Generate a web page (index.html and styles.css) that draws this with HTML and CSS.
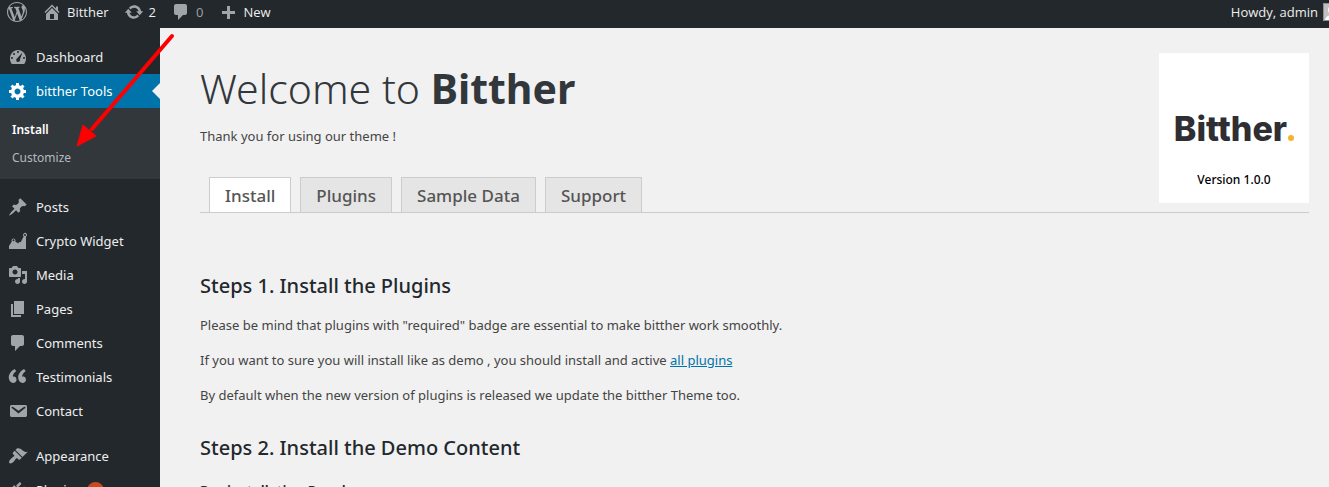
FILE: index.html
```html
<!DOCTYPE html>
<html lang="en">
<head>
<meta charset="utf-8">
<title>Welcome to Bitther</title>
<link rel="stylesheet" href="styles.css">
</head>
<body>
<header class="adminbar">
  <a class="bar-item" href="#" aria-label="About WordPress"><svg class="icon" viewBox="0 0 20 20"><path d="M20 10c0-5.51-4.49-10-10-10C4.48 0 0 4.49 0 10c0 5.52 4.48 10 10 10 5.51 0 10-4.48 10-10zM7.78 15.37L4.37 6.22c.55-.02 1.17-.08 1.17-.08.5-.06.44-1.13-.06-1.11 0 0-1.45.11-2.37.11-.18 0-.37 0-.58-.01C4.12 2.69 6.87 1.11 10 1.11c2.33 0 4.45.87 6.05 2.34-.68-.11-1.65.39-1.65 1.58 0 .74.45 1.36.9 2.1.35.61.55 1.36.55 2.46 0 1.49-1.4 5-1.4 5l-3.03-8.37c.54-.02.82-.17.82-.17.5-.05.44-1.25-.06-1.22 0 0-1.44.12-2.38.12-.87 0-2.33-.12-2.33-.12-.5-.03-.56 1.2-.06 1.22l.92.08 1.26 3.41zM17.41 10c.24-.64.74-1.87.43-4.25.7 1.29 1.05 2.71 1.05 4.25 0 3.29-1.73 6.24-4.4 7.78.97-2.59 1.94-5.2 2.92-7.78zM6.1 18.09C3.12 16.65 1.11 13.53 1.11 10c0-1.3.23-2.48.72-3.59C3.25 10.3 4.67 14.2 6.1 18.09zm4.03-6.63l2.58 6.98c-.86.29-1.76.45-2.71.45-.79 0-1.57-.11-2.29-.33.81-2.38 1.62-4.74 2.42-7.1z"/></svg></a>
  <a class="bar-item" href="#"><svg class="icon" viewBox="0 0 20 20"><path d="M16 8.5l1.53 1.53-1.06 1.06L10 4.6l-6.47 6.49-1.06-1.06L10 2.5l4 4v-2h2v4zm-6-2.46l6 5.99V18H4v-5.97zM12 17v-5H8v5h4z"/></svg>Bitther</a>
  <a class="bar-item" href="#"><svg class="icon" viewBox="0 0 20 20"><path d="M10.2 3.28c3.53 0 6.43 2.61 6.92 6h2.08l-3.5 4-3.5-4h2.32c-.45-1.97-2.21-3.45-4.32-3.45-1.45 0-2.73.71-3.54 1.78L4.95 5.66C6.23 4.2 8.11 3.28 10.2 3.28zm-.4 13.44c-3.52 0-6.43-2.61-6.92-6H.8l3.5-4c1.17 1.33 2.33 2.67 3.5 4H5.48c.45 1.97 2.21 3.45 4.32 3.45 1.45 0 2.73-.71 3.54-1.78l1.71 1.95c-1.28 1.46-3.15 2.38-5.25 2.38z"/></svg>2</a>
  <a class="bar-item muted" href="#"><svg class="icon" viewBox="0 0 20 20"><path d="M5 2h9c1.1 0 2 .9 2 2v7c0 1.1-.9 2-2 2h-2l-5 5v-5H5c-1.1 0-2-.9-2-2V4c0-1.1.9-2 2-2z"/></svg>0</a>
  <a class="bar-item" href="#"><svg class="icon" viewBox="0 0 20 20"><path d="M17 9v3h-5v5H9v-5H4V9h5V4h3v5h5z"/></svg>New</a>
  <a class="bar-item account" href="#">Howdy, admin<svg class="avatar" viewBox="0 0 18 18"><path fill="#c0c0c0" d="M0 0h18v18H0z"/><circle cx="9" cy="7" r="4" fill="#fff"/><path fill="#fff" d="M2 18c0-8 14-8 14 0z"/><path fill="none" stroke="#8c8f94" d="M.5.5h17v17H.5z"/></svg></a>
</header>
<div class="layout">
  <nav class="sidebar" aria-label="Main menu">
    <a class="menu-item" href="#"><svg class="icon" viewBox="0 0 20 20"><path fill-rule="evenodd" d="M3.76 17h12.48c1.14-1.55 1.76-3.43 1.76-5.5C18 6.81 14.42 3 10 3s-8 3.81-8 8.5c0 2.07.62 3.95 1.76 5.5zM10 4a1 1 0 110 2 1 1 0 010-2zM6 6a1 1 0 110 2 1 1 0 010-2zM14.5 5.5L12 12.2c.5 1.8-.6 2.8-2 2.8-1.5 0-2.3-1.6-1.5-3zM4 10a1 1 0 110 2 1 1 0 010-2zM16 10a1 1 0 110 2 1 1 0 010-2z"/></svg>Dashboard</a>
    <a class="menu-item current" href="#"><svg class="icon" viewBox="0 0 20 20"><path d="M18 12h-2.18c-.17.7-.44 1.35-.81 1.93l1.54 1.54-2.1 2.1-1.54-1.54c-.58.36-1.23.63-1.91.79V19H8v-2.18c-.68-.16-1.33-.43-1.91-.79l-1.54 1.54-2.12-2.12 1.54-1.54c-.36-.58-.63-1.23-.79-1.91H1V9.03h2.17c.16-.7.44-1.35.8-1.94L2.43 5.55l2.1-2.1 1.54 1.54c.58-.37 1.24-.64 1.93-.81V2h3v2.18c.68.16 1.33.43 1.91.79l1.54-1.54 2.12 2.12-1.54 1.54c.36.59.64 1.24.8 1.94H18V12zm-8.5 1.5c1.66 0 3-1.34 3-3s-1.34-3-3-3-3 1.34-3 3 1.34 3 3 3z"/></svg>bitther Tools</a>
    <div class="submenu">
      <a class="sub-item active" href="#">Install</a>
      <a class="sub-item" href="#">Customize</a>
    </div>
    <a class="menu-item" href="#"><svg class="icon" viewBox="0 0 20 20"><path d="M10.44 3.02l1.82-1.82 6.36 6.35-1.83 1.82c-1.05-.68-2.48-.57-3.41.36l-.75.75c-.92.93-1.04 2.35-.35 3.41l-1.83 1.82-2.41-2.41-2.8 2.79c-.42.42-3.38 2.71-3.8 2.29s1.86-3.39 2.28-3.81l2.79-2.79L4.1 9.36l1.83-1.82c1.05.69 2.48.57 3.4-.36l.75-.75c.93-.92 1.05-2.35.36-3.41z"/></svg>Posts</a>
    <a class="menu-item" href="#"><svg class="icon" viewBox="0 0 20 20"><path fill-rule="evenodd" d="M18 18V5.72A2 2 0 1015.6 5.4L12.7 11.3A1.5 1.5 0 0010.3 12.5L7.2 10.6A2 2 0 103.8 10.6L1 15v3zM17 3a1 1 0 110 2 1 1 0 010-2zM5.5 8.2a1 1 0 110 2 1 1 0 010-2z"/></svg>Crypto Widget</a>
    <a class="menu-item" href="#"><svg class="icon" viewBox="0 0 20 20"><path d="M13 11V4c0-.55-.45-1-1-1h-1.67L9 1H5L3.67 3H2c-.55 0-1 .45-1 1v7c0 .55.45 1 1 1h10c.55 0 1-.45 1-1zM7 4.5c1.38 0 2.5 1.12 2.5 2.5S8.38 9.5 7 9.5 4.5 8.38 4.5 7 5.62 4.5 7 4.5zM14 6h5v10.5c0 1.38-1.12 2.5-2.5 2.5S14 17.88 14 16.5s1.12-2.5 2.5-2.5c.17 0 .34.02.5.05V9h-3V6zm-4 8.05V13h2v3.5c0 1.38-1.12 2.5-2.5 2.5S7 17.88 7 16.5 8.12 14 9.5 14c.17 0 .34.02.5.05z"/></svg>Media</a>
    <a class="menu-item" href="#"><svg class="icon" viewBox="0 0 20 20"><path d="M6 15V2h10v13H6zm-1 1h8v2H3V5h2v11z"/></svg>Pages</a>
    <a class="menu-item" href="#"><svg class="icon" viewBox="0 0 20 20"><path d="M5 2h9c1.1 0 2 .9 2 2v7c0 1.1-.9 2-2 2h-2l-5 5v-5H5c-1.1 0-2-.9-2-2V4c0-1.1.9-2 2-2z"/></svg>Comments</a>
    <a class="menu-item" href="#"><svg class="icon" viewBox="0 0 20 20"><path d="M8.54 12.74c0-.87-.24-1.61-.72-2.22-.73-.92-2.14-1.03-2.96-.85-.34-1.93 1.3-4.39 3.42-5.45L6.65 1.94C3.45 3.46.31 6.96.85 11.37 1.19 14.16 2.8 16 5.08 16c1 0 1.83-.29 2.48-.88.66-.59.98-1.38.98-2.38zm9.43 0c0-.87-.24-1.61-.72-2.22-.73-.92-2.14-1.03-2.96-.85-.34-1.93 1.3-4.39 3.42-5.45l-1.63-2.28c-3.2 1.52-6.34 5.02-5.8 9.43.34 2.79 1.95 4.63 4.23 4.63 1 0 1.83-.29 2.48-.88.66-.59.98-1.38.98-2.38z"/></svg>Testimonials</a>
    <a class="menu-item" href="#"><svg class="icon" viewBox="0 0 20 20"><path d="M3.87 4h13.25C18.37 4 19 4.59 19 5.79v8.42c0 1.19-.63 1.79-1.88 1.79H3.87c-1.25 0-1.88-.6-1.88-1.79V5.79c0-1.2.63-1.79 1.88-1.79zm6.62 8.6l6.74-5.53c.24-.2.43-.66.13-1.07-.29-.41-.82-.42-1.17-.17l-5.7 3.86L4.8 5.83c-.35-.25-.88-.24-1.17.17-.3.41-.11.87.13 1.07z"/></svg>Contact</a>
    <a class="menu-item group-start" href="#"><svg class="icon" viewBox="0 0 20 20"><path d="M14.48 11.06L7.41 3.99l1.5-1.5c.5-.56 2.3-.47 3.51.32 1.21.8 1.43 1.28 2.91 2.1 1.18.64 2.45 1.26 4.45.85zm-.71.71L6.7 4.7 4.93 6.47c-.39.39-.39 1.02 0 1.41l1.06 1.06c.39.39.39 1.03 0 1.42-.6.6-1.43 1.11-2.21 1.69-.35.26-.7.53-1.01.84C1.43 14.23.4 16.08 1.4 17.07c.99 1 2.84-.03 4.18-1.36.31-.31.58-.66.85-1.02.57-.78 1.08-1.61 1.69-2.21.39-.39 1.02-.39 1.41 0l1.06 1.06c.39.39 1.02.39 1.41 0z"/></svg>Appearance</a>
    <a class="menu-item" href="#"><svg class="icon" viewBox="0 0 20 20"><path d="M13.11 4.36L9.87 7.6 8 5.73l3.24-3.24c.35-.34 1.05-.2 1.56.32.52.51.66 1.21.31 1.55zm-8 1.77l.91-1.12 9.01 9.01-1.19.84c-.71.71-2.63 1.16-3.82 1.16H6.14L4.9 17.26c-.59.59-1.54.59-2.12 0-.59-.58-.59-1.53 0-2.12l1.24-1.24v-3.88c0-1.13.4-3.19 1.09-3.89zm7.26 3.97l3.24-3.24c.34-.35 1.04-.21 1.55.31.52.51.66 1.21.31 1.55l-3.24 3.25z"/></svg>Plugins<span class="count"></span></a>
  </nav>
  <main class="content">
    <section class="intro">
      <div class="intro-text">
        <h1>Welcome to <strong>Bitther</strong></h1>
        <p>Thank you for using our theme !</p>
      </div>
      <div class="badge">
        <div class="logo">Bitther<span class="dot"></span></div>
        <span class="version">Version 1.0.0</span>
      </div>
      <nav class="tabs" aria-label="Sections">
        <a class="tab selected" href="#">Install</a>
        <a class="tab" href="#">Plugins</a>
        <a class="tab" href="#">Sample Data</a>
        <a class="tab" href="#">Support</a>
      </nav>
    </section>
    <section class="step">
      <h2>Steps 1. Install the Plugins</h2>
      <p>Please be mind that plugins with "required" badge are essential to make bitther work smoothly.</p>
      <p>If you want to sure you will install like as demo , you should install and active <a href="#">all plugins</a></p>
      <p>By default when the new version of plugins is released we update the bitther Theme too.</p>
    </section>
    <section class="step">
      <h2>Steps 2. Install the Demo Content</h2>
      <h3>Pre-installation Panel</h3>
    </section>
  </main>
</div>
<svg class="pointer" width="110" height="124" viewBox="0 0 110 124" aria-hidden="true"><path d="M102 6L22 99" fill="none" stroke="#f00" stroke-width="4" stroke-linecap="round"/><path d="M7 116L13 95L26 106Z" fill="#f00" stroke="#f00"/></svg>
</body>
</html>
```
FILE: styles.css
```css
* { box-sizing: border-box; }
body {
  margin: 0;
  height: 100vh;
  overflow: hidden;
  display: flex;
  flex-direction: column;
  background: #f1f1f1;
  color: #444;
  font: 13px/20px "Noto Sans", "Open Sans", sans-serif;
}
a { text-decoration: none; }
.icon { width: 20px; height: 20px; fill: #a0a5aa; flex: none; }

.adminbar {
  display: flex;
  flex: none;
  height: 28px;
  padding-left: 7px;
  gap: 15px;
  background: #23282d;
  overflow: hidden;
}
.bar-item {
  display: flex;
  align-items: center;
  gap: 5px;
  padding-bottom: 4px;
  color: #eee;
  white-space: nowrap;
  font-family: "Open Sans", "Noto Sans", sans-serif;
}
.muted { color: #9ca1a6; }
.account { margin-left: auto; margin-right: -12px; }
.avatar { width: 18px; height: 18px; }

.layout { display: flex; flex: 1; min-height: 0; }
.sidebar {
  flex: none;
  width: 160px;
  padding-top: 12px;
  background: #23282d;
  overflow: hidden;
}
.menu-item {
  display: flex;
  align-items: center;
  gap: 8px;
  height: 34px;
  padding-left: 8px;
  color: #eee;
}
.current { position: relative; background: #0073aa; color: #fff; }
.current .icon { fill: #fff; }
.current::after {
  content: "";
  position: absolute;
  right: 0;
  top: 9px;
  border: 8px solid transparent;
  border-right-color: #f1f1f1;
}
.submenu {
  display: flex;
  flex-direction: column;
  margin-bottom: 11px;
  padding: 8px 12px 7px;
  background: #32373c;
}
.sub-item { line-height: 28px; font-size: 12px; color: #b4b9be; }
.active { color: #fff; font-weight: 600; }
.group-start { margin-top: 11px; }
.count {
  width: 17px;
  height: 17px;
  margin-left: -2px;
  border-radius: 9px;
  background: #ca4a1f;
}

.content { flex: 1; min-width: 0; padding: 25px 20px 0 40px; overflow: hidden; }
.intro {
  display: grid;
  grid-template-columns: 1fr 150px;
  margin-bottom: 58px;
}
.intro-text, .badge { grid-row: 1; }
.badge {
  grid-column: 2;
  height: 150px;
  padding-top: 52px;
  background: #fff;
  color: #000;
  text-align: center;
}
h1 {
  margin: 7px 0 10px;
  color: #32373c;
  font-size: 41px;
  font-weight: 300;
  line-height: 56px;
}
h1 strong { font-weight: 700; }
p { margin: 0 0 15px; }
.intro-text p { margin: 0; }
.logo {
  display: flex;
  justify-content: center;
  align-items: baseline;
  gap: 1px;
  height: 48px;
  color: #2e2e33;
  font: 800 34px/48px Inter, sans-serif;
}
.dot { width: 6px; height: 6px; border-radius: 3px; background: #f5b32d; }
.version { display: block; margin-top: 17px; font-size: 12px; font-weight: 500; }
.tabs {
  grid-column: 1 / -1;
  grid-row: 2;
  display: flex;
  align-items: flex-end;
  gap: 9px;
  height: 36px;
  margin-top: -26px;
  padding-left: 9px;
  border-bottom: 1px solid #ccc;
}
.tab {
  height: 35px;
  padding: 0 15px;
  border: 1px solid #ccc;
  border-bottom: 0;
  background: #e5e5e5;
  color: #555;
  font-size: 17px;
  font-weight: 500;
  line-height: 35px;
}
.selected { background: #fff; }
h2 {
  margin: 0 0 14px;
  color: #23282d;
  font-size: 20px;
  font-weight: 500;
  line-height: 30px;
}
.step { margin-bottom: 28px; }
h3 { margin: 0; color: #23282d; font-size: 14px; font-weight: 600; line-height: 28px; }
.step a { color: #0073aa; text-decoration: underline; }
.pointer { position: absolute; left: 70px; top: 30px; pointer-events: none; }
```
